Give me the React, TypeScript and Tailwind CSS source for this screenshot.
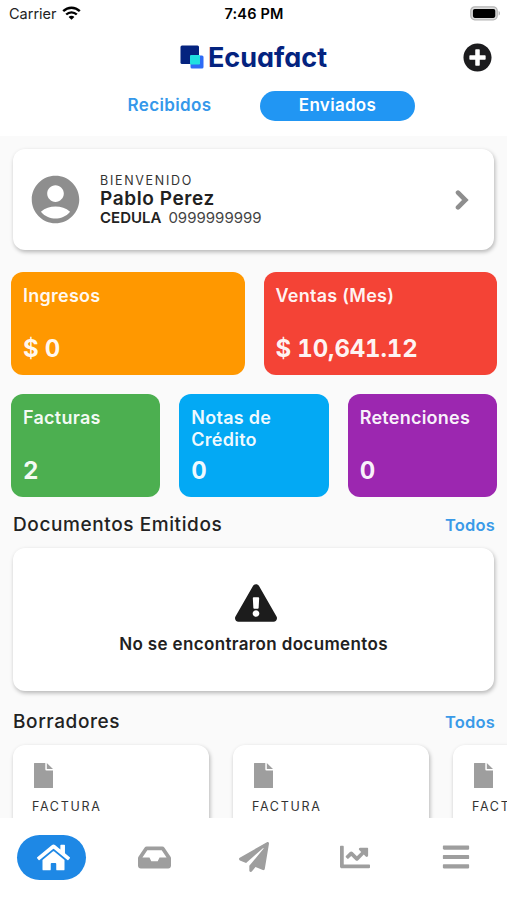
import React from 'react';
import {
    FaBars,
    FaChartLine,
    FaExclamationTriangle,
    FaHome,
    FaInbox,
    FaPaperPlane,
    FaPlusCircle,
} from 'react-icons/fa';
import { MdAccountCircle } from 'react-icons/md';

interface StatCardProps {
    label: string;
    value: string;
    color: string;
}

const navItems = [
    { id: 'inbox', icon: <FaInbox size={33} /> },
    { id: 'send', icon: <FaPaperPlane size={30} className="mr-[2px]" /> },
    { id: 'reports', icon: <FaChartLine size={30} /> },
    { id: 'menu', icon: <FaBars size={30} /> },
];

const drafts = [
    { id: 1, type: 'FACTURA' },
    { id: 2, type: 'FACTURA' },
    { id: 3, type: 'FACTURA' },
];

const cardShadow = 'shadow-[1px_2px_4px_rgba(0,0,0,0.28)]';

const StatusBar: React.FC = () => (
    <div className="grid h-7 grid-cols-3 items-center pl-[9px] pr-[6px] text-black">
        <div className="flex items-center gap-[5px]">
            <span className="text-[14.5px] leading-none text-[#222]">Carrier</span>
            <svg width="19" height="14" viewBox="0 0 19 14" className="-mt-[2px]" fill="none" stroke="currentColor" strokeWidth="2.4">
                <path d="M1.2 5.2C6 .6 13 .6 17.8 5.2" />
                <path d="M4.2 8.5C7.2 5.6 11.8 5.6 14.8 8.5" />
                <path d="M9.5 13.8 6.6 10.9C8.2 9.4 10.8 9.4 12.4 10.9Z" fill="currentColor" stroke="none" />
            </svg>
        </div>
        <span className="-ml-[2px] text-center text-[14.5px] font-semibold leading-none tracking-[0.15px]">7:46 PM</span>
        <svg className="-mt-[2px] justify-self-end" width="31" height="15" viewBox="0 0 31 15">
            <rect x="0.8" y="0.8" width="26.4" height="13" rx="4" fill="#ddd" stroke="#b5b5b5" strokeWidth="1.3" />
            <rect x="2.9" y="2.9" width="22.4" height="9" rx="1.8" fill="#000" />
            <path d="M28.6 5c1.8.6 1.8 4 0 4.6z" fill="#b5b5b5" />
        </svg>
    </div>
);

const Logo: React.FC = () => (
    <div className="flex items-center gap-[4px]">
        <svg width="24" height="24" viewBox="0 0 24 24">
            <rect x="0.5" y="0.5" width="18.5" height="18.5" rx="1.5" fill="#04237f" />
            <path d="M10.5 19v3q0 1.5 1.5 1.5h10q1.5 0 1.5-1.5v-10q0-1.5-1.5-1.5h-2.5v8.5z" fill="#2e6bf6" />
            <rect x="10" y="10" width="10" height="9.5" rx="1" fill="#1fe0e0" />
        </svg>
        <span className="text-[27px] font-bold leading-none text-[#04237f] [font-feature-settings:'cv11']">
            Ecuafact
        </span>
    </div>
);

const Chevron: React.FC = () => (
    <svg width="14" height="20" viewBox="0 0 14 20" fill="none" stroke="#8e8e8e" strokeWidth="4.6">
        <path d="M3 2.6 10.4 10 3 17.4" strokeLinecap="round" />
    </svg>
);

const FileIcon: React.FC = () => (
    <svg width="19" height="25" viewBox="0 0 19 25" fill="#9e9e9e">
        <path d="M.5 0H11.3V6.3Q11.3 7.500 12.5 7.500H19V24.5Q19 25 18.5 25H.5Q0 25 0 24.5V.5Q0 0 .5 0Z" />
        <path d="M12.8 0 19 6.100H12.8Z" />
    </svg>
);

const StatCard: React.FC<StatCardProps> = ({ label, value, color }) => (
    <div className={`flex h-[103px] flex-col justify-between rounded-xl px-3 pb-[11px] pt-[13px] text-white/95 ${color}`}>
        <span className="text-[18px] font-semibold leading-[22px] tracking-[0.25px]">{label}</span>
        <span className="text-[24px] font-bold leading-[30px] tracking-[-0.15px] tabular-nums">{value}</span>
    </div>
);

const SectionTitle: React.FC<{ title: string }> = ({ title }) => (
    <div className="flex items-center justify-between pl-[13px] pr-[12px]">
        <h2 className="text-[19px] font-medium leading-6 tracking-[0.6px] text-[#222]">{title}</h2>
        <button className="text-[16.5px] font-semibold leading-6 tracking-[0.2px] text-[#3a9ae8]">Todos</button>
    </div>
);

const App: React.FC = () => {
    return (
        <div className="flex h-[900px] w-[507px] flex-col overflow-hidden bg-[#fafafa] font-['Inter','Liberation_Sans',sans-serif] text-[#212121]">
            <header className="h-[136px] shrink-0 bg-white">
                <StatusBar />
                <div className="grid h-[58px] grid-cols-[1fr_auto_1fr] items-center px-[15px]">
                    <div />
                    <Logo />
                    <button className="justify-self-end text-[#1c1c1e]">
                        <FaPlusCircle size={29} />
                    </button>
                </div>
                <div className="flex items-center pl-[92px] pt-[5px]">
                    <button className="h-[30px] w-[155px] pb-px text-[17px] font-semibold tracking-[0.35px] text-[#3598ea]">
                        Recibidos
                    </button>
                    <button className="ml-[13px] h-[30px] w-[155px] rounded-full bg-[#2196f3] pb-px text-[17px] font-semibold tracking-[0.3px] text-white">
                        Enviados
                    </button>
                </div>
            </header>

            <main className="min-h-0 flex-1 overflow-hidden pt-[13px]">
                <div className={`mx-[13px] flex h-[101px] items-center rounded-xl bg-white pl-[14px] pr-[25px] ${cardShadow}`}>
                    <MdAccountCircle size={57} className="text-[#8e8e8e]" />
                    <div className="ml-4 flex-1 pt-px">
                        <p className="text-[12.5px] leading-[16px] tracking-[1.7px] text-[#333]">BIENVENIDO</p>
                        <p className="text-[19px] font-semibold leading-[20px] tracking-[0.6px]">Pablo Perez</p>
                        <p className="flex gap-[7px] text-[15px] leading-[18px]">
                            <span className="font-semibold">CEDULA</span>
                            <span className="text-[#444]">0999999999</span>
                        </p>
                    </div>
                    <Chevron />
                </div>

                <div className="mt-[22px] grid grid-cols-2 gap-x-[19px] pl-[11px] pr-[10px]">
                    <StatCard label="Ingresos" value="$ 0" color="bg-[#ff9800]" />
                    <StatCard label="Ventas (Mes)" value="$ 10,641.12" color="bg-[#f44336]" />
                </div>
                <div className="mt-[19px] grid grid-cols-3 gap-x-[19px] pl-[11px] pr-[10px]">
                    <StatCard label="Facturas" value="2" color="bg-[#4caf50]" />
                    <StatCard label="Notas de Crédito" value="0" color="bg-[#03a9f4]" />
                    <StatCard label="Retenciones" value="0" color="bg-[#9c27b0]" />
                </div>

                <div className="mt-4">
                    <SectionTitle title="Documentos Emitidos" />
                </div>
                <div className={`mx-[13px] mt-[11px] flex h-[143px] flex-col items-center rounded-xl bg-white pt-[34px] ${cardShadow}`}>
                    <FaExclamationTriangle size={42} className="ml-[5px] text-[#1c1c1c]" />
                    <p className="mt-[9px] text-[17px] font-semibold leading-[22px] tracking-[0.36px]">No se encontraron documentos</p>
                </div>

                <div className="mt-[19px]">
                    <SectionTitle title="Borradores" />
                </div>
                <div className="mt-[11px] flex gap-6 pl-[13px]">
                    {drafts.map((draft) => (
                        <div key={draft.id} className={`h-[110px] w-[196px] shrink-0 rounded-xl bg-white pl-[19px] pt-[18px] ${cardShadow}`}>
                            <div className="ml-[2px]">
                                <FileIcon />
                            </div>
                            <p className="mt-[11px] text-[12.5px] leading-4 tracking-[1.7px] text-[#333]">{draft.type}</p>
                        </div>
                    ))}
                </div>
            </main>

            <nav className="flex h-[82px] shrink-0 items-start bg-white pl-[17px] pt-[17px]">
                <button className="flex h-[45px] w-[69px] items-center justify-center rounded-full bg-[#1e88e5] pl-[4px] text-white">
                    <FaHome size={33} />
                </button>
                <div className="ml-[18px] grid h-[45px] w-[402px] grid-cols-4">
                    {navItems.map((item) => (
                        <button key={item.id} className="flex items-center justify-center pb-px text-[#9e9e9e]">
                            {item.icon}
                        </button>
                    ))}
                </div>
            </nav>
        </div>
    );
};

export default App;
